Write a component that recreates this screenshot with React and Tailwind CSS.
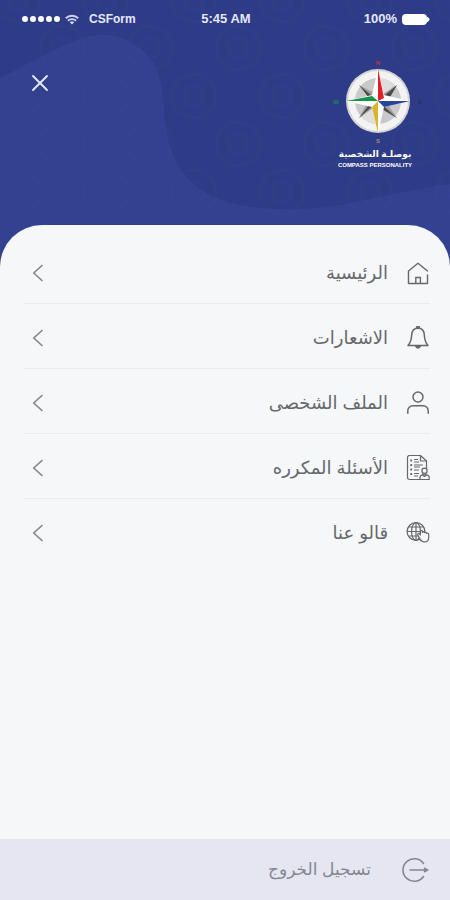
import { X } from 'lucide-react';

function HomeIcon() {
  return (
    <svg viewBox="0 0 24 24" className="size-6" fill="none" stroke="currentColor" strokeWidth="1.4">
      <path d="M21.500 14v8.500h-19V10L12 2.300l9.500 7.700" strokeLinejoin="round" strokeLinecap="round" />
      <path d="M9.800 22v-5.500h4.600V22" />
    </svg>
  );
}

function BellIcon() {
  return (
    <svg viewBox="0 0 24 24" className="size-6" fill="none" stroke="currentColor" strokeWidth="1.5" strokeLinejoin="round" strokeLinecap="round">
      <path d="M12 2.200c-4 0-6.100 3-6.300 6.600-.2 4.200-.8 7.600-3.700 10.800h20c-2.900-3.200-3.500-6.600-3.700-10.800C18.100 5.200 16 2.200 12 2.200z" />
      <path d="M10.500 1.900a1.500 1.500 0 0 1 3 0z" fill="currentColor" />
      <path d="M9.800 20.300a2.300 2.300 0 0 0 4.400 0z" fill="currentColor" />
    </svg>
  );
}

function UserIcon() {
  return (
    <svg viewBox="0 0 24 24" className="size-6" fill="none" stroke="currentColor" strokeWidth="1.500" strokeLinecap="round">
      <circle cx="12" cy="6" r="5" />
      <path d="M1.800 22.200v-2.400a5 5 0 0 1 5-5h10.400a5 5 0 0 1 5 5v2.400" />
    </svg>
  );
}

function FaqIcon() {
  return (
    <svg viewBox="0 0 24 26" className="h-[26px] w-6" fill="none" stroke="currentColor" strokeWidth="1.200" strokeLinejoin="round">
      <path d="M14 24.500H3.500a2 2 0 0 1-2-2v-20a2 2 0 0 1 2-2h11l6 5.500v7.500" />
      <path d="M14.500.5V6h6" />
      <path d="M4.300 5.500h1.800M4.300 10h1.800M4.300 14.500h1.800M4.300 19h1.800" strokeWidth="2" />
      <path d="M8 4.500h4M8 7h5M8 10h9M8 12h6M8 15h5M8 18.500h5M8 21h4" />
      <circle cx="18.500" cy="15.800" r="2.600" fill="#f5f7f9" />
      <path d="M14 24.500v-1.700a3 3 0 0 1 3-3h3.200a3 3 0 0 1 3 3v1.700z" fill="#f5f7f9" />
      <path d="M17 18.500v2l1.500 1 1.500-1v-2" />
    </svg>
  );
}

function GlobeHandIcon() {
  return (
    <svg viewBox="0 0 24 24" className="size-6" fill="none" stroke="currentColor" strokeWidth="1.200" strokeLinejoin="round">
      <circle cx="10" cy="10.500" r="8.900" />
      <ellipse cx="10" cy="10.500" rx="4.500" ry="8.900" />
      <path d="M10 1.600v17.800M1.100 10.500h17.800M2.500 6h15M2.500 15h15" />
      <path
        d="M12 14.200c-.8-1.600.8-2.500 1.700-1.200l.7 1v-3.500c0-1.500 2-1.500 2 0v.9c.6-.9 1.900-.7 2.100.3.700-.7 1.900-.4 2 .6.900-.5 2.200 0 2.200 1.100v3c0 3-1.900 4.500-4.600 4.500-3.500 0-4-2.500-6.100-6.700z"
        fill="#f5f7f9"
      />
    </svg>
  );
}

function LogoutIcon() {
  return (
    <svg viewBox="0 0 28 26" className="h-[26px] w-7" fill="none" stroke="currentColor" strokeWidth="1.600" strokeLinecap="round">
      <path d="M22.500 6.500A11.300 11.300 0 1 0 22.500 19.500" />
      <path d="M9 13h14" />
      <path d="M23.500 11.200l3.500 1.800-3.500 1.800z" fill="currentColor" strokeWidth="1.400" strokeLinejoin="round" />
    </svg>
  );
}

function Chevron() {
  return (
    <svg viewBox="0 0 12 18" className="mx-2 h-[18px] w-3 shrink-0 text-[#85878a]" fill="none" stroke="currentColor" strokeWidth="1.600">
      <path d="M10.500 1L1.800 9l8.700 8" />
    </svg>
  );
}

const MENU = [
  { label: 'الرئيسية', icon: HomeIcon },
  { label: 'الاشعارات', icon: BellIcon },
  { label: 'الملف الشخصى', icon: UserIcon },
  { label: 'الأسئلة المكرره', icon: FaqIcon },
  { label: 'قالو عنا', icon: GlobeHandIcon },
];

function StatusBar() {
  return (
    <div className="grid grid-cols-3 items-center pt-[10px] pr-5 pl-[22px] text-[12px] leading-[18px] font-bold text-[#e4e8fa]">
      <div className="flex items-center">
        <svg viewBox="0 0 38 6" className="h-[6px] w-[38px]" fill="#fff">
          {[3, 11, 19, 27, 35].map((cx) => (
            <circle key={cx} cx={cx} cy="3" r="3" />
          ))}
        </svg>
        <svg viewBox="0 0 14 11" className="ml-[5px] h-[11px] w-[14px]" fill="none" stroke="#cfd6f4" strokeWidth="1.900">
          <path d="M.8 4.200a9 9 0 0 1 12.400 0M3 6.700a5.800 5.800 0 0 1 8 0" />
          <path d="M7 10.500L4.800 8.200a3.200 3.200 0 0 1 4.400 0z" fill="#cfd6f4" stroke="none" />
        </svg>
        <span className="ml-[10px]">CSForm</span>
      </div>
      <span className="text-center text-[13px]">5:45 AM</span>
      <div className="flex items-center justify-end gap-[5px]">
        <span className="text-[13px]">100%</span>
        <svg viewBox="0 0 28 12" className="h-3 w-7" fill="#fff">
          <rect width="25" height="11" y="1" rx="4" />
          <path d="M25 4c3.300.6 3.300 4.400 0 5z" />
        </svg>
      </div>
    </div>
  );
}

function HeaderBackdrop() {
  return (
    <svg className="absolute inset-x-0 top-0 h-[270px] w-full" viewBox="0 0 450 270" preserveAspectRatio="none" aria-hidden="true">
      <defs>
        <pattern id="rosettes" width="88" height="96" patternUnits="userSpaceOnUse" x="18" y="24">
          <g fill="none" stroke="#4a58a4" strokeOpacity="0.070" strokeWidth="2">
            <circle cx="44" cy="24" r="22" />
            <circle cx="44" cy="24" r="10" />
            <circle cx="0" cy="72" r="22" />
            <circle cx="0" cy="72" r="10" />
            <circle cx="88" cy="72" r="22" />
            <circle cx="88" cy="72" r="10" />
          </g>
        </pattern>
      </defs>
      <rect width="450" height="270" fill="#2e3b86" />
      <path
        d="M0 78C30 63 55 48 82 38C112 28 140 42 153 62C168 88 160 118 172 151C184 186 215 205 262 208C330 215 380 193 450 184V270H0z"
        fill="#334191"
      />
      <rect width="450" height="270" fill="url(#rosettes)" />
    </svg>
  );
}

function CompassLogo() {
  return (
    <div className="flex w-[92px] flex-col text-white">
      <svg viewBox="0 0 92 88" className="h-[88px] w-[92px]">
        <circle cx="46" cy="43" r="32" fill="#d3d4d6" />
        <circle cx="46" cy="43" r="30" fill="#f3f3f3" />
        <circle cx="46" cy="43" r="23" fill="#c9c9cb" />
        <path d="M46 20a23 23 0 0 1 16 7L46 43zM46 66a23 23 0 0 1-16-7L46 43z" fill="#dededf" />
        <path d="M27 27l21 11-7 7zM65 27L54 47l-9-7zM27 60l11-21 9 7zM65 60L44 48l8-7z" fill="#a1a1a1" />
        <path d="M27 27l19 16-5 2zM65 27L46 43l8 3zM27 60l19-17-5-1zM65 60L46 43l-3 4z" fill="#4b4b4b" />
        <path d="M46 11l6 26-6 6-6-6zM46 75l6-26-6-6-6 6zM14 43l26-6 6 6-6 6zM78 43l-26-6-6 6 6 6z" fill="#fff" />
        <path d="M46 11l6 29-6 3z" fill="#df2029" />
        <path d="M14 43l26-5 6 5z" fill="#169548" />
        <path d="M78 43l-26 6-6-6z" fill="#24479c" />
        <path d="M46 75l-6-26 6-6z" fill="#d9b52c" />
        <g fontSize="6" fontWeight="700" textAnchor="middle">
          <text x="46" y="7" fill="#c72d45">N</text>
          <text x="46" y="85" fill="#a8946b">S</text>
          <text x="4" y="46" fill="#148a54">W</text>
          <text x="88" y="46" fill="#252d63">E</text>
        </g>
      </svg>
      <div className="mt-[2px] mr-[6px] text-center">
        <p dir="rtl" className="text-[9px] leading-[13px] font-bold whitespace-nowrap">بوصلـة الشخصية</p>
        <p className="text-[6px] leading-[8px] font-bold whitespace-nowrap">COMPASS PERSONALITY</p>
      </div>
    </div>
  );
}

function MenuItem({ label, icon: Icon }) {
  return (
    <li className="border-b border-[#eaecee] last:border-b-0">
      <button type="button" className="flex h-16 w-full cursor-pointer items-center pt-1 text-[#66686c]">
        <span className="flex w-6 shrink-0 justify-center">
          <Icon />
        </span>
        <span className="mr-[18px] flex-1 text-right text-[18px] leading-6">{label}</span>
        <Chevron />
      </button>
    </li>
  );
}

export default function App() {
  return (
    <div className="relative flex min-h-screen flex-col bg-[#f5f7f9] font-['Liberation_Sans','DejaVu_Sans',sans-serif]">
      <HeaderBackdrop />

      <header className="relative h-[225px] shrink-0">
        <StatusBar />
        <div className="flex items-start justify-between pt-[30px] pr-[26px] pl-[26px]">
          <button type="button" aria-label="إغلاق" className="mt-[11px] cursor-pointer text-[#e4e8fa]">
            <X className="size-7" strokeWidth={1.6} />
          </button>
          <CompassLogo />
        </div>
      </header>

      <nav dir="rtl" className="relative flex-1 rounded-t-[42px] bg-[#f5f7f9] pt-[14px] pr-5 pl-6">
        <ul>
          {MENU.map((item) => (
            <MenuItem key={item.label} {...item} />
          ))}
        </ul>
      </nav>

      <footer dir="rtl" className="relative bg-[#e6e6f2]">
        <button type="button" className="flex h-[61px] w-full cursor-pointer items-center pr-[21px] text-[#85868f]">
          <LogoutIcon />
          <span className="mr-[30px] text-[17px] leading-6">تسجيل الخروج</span>
        </button>
      </footer>
    </div>
  );
}
